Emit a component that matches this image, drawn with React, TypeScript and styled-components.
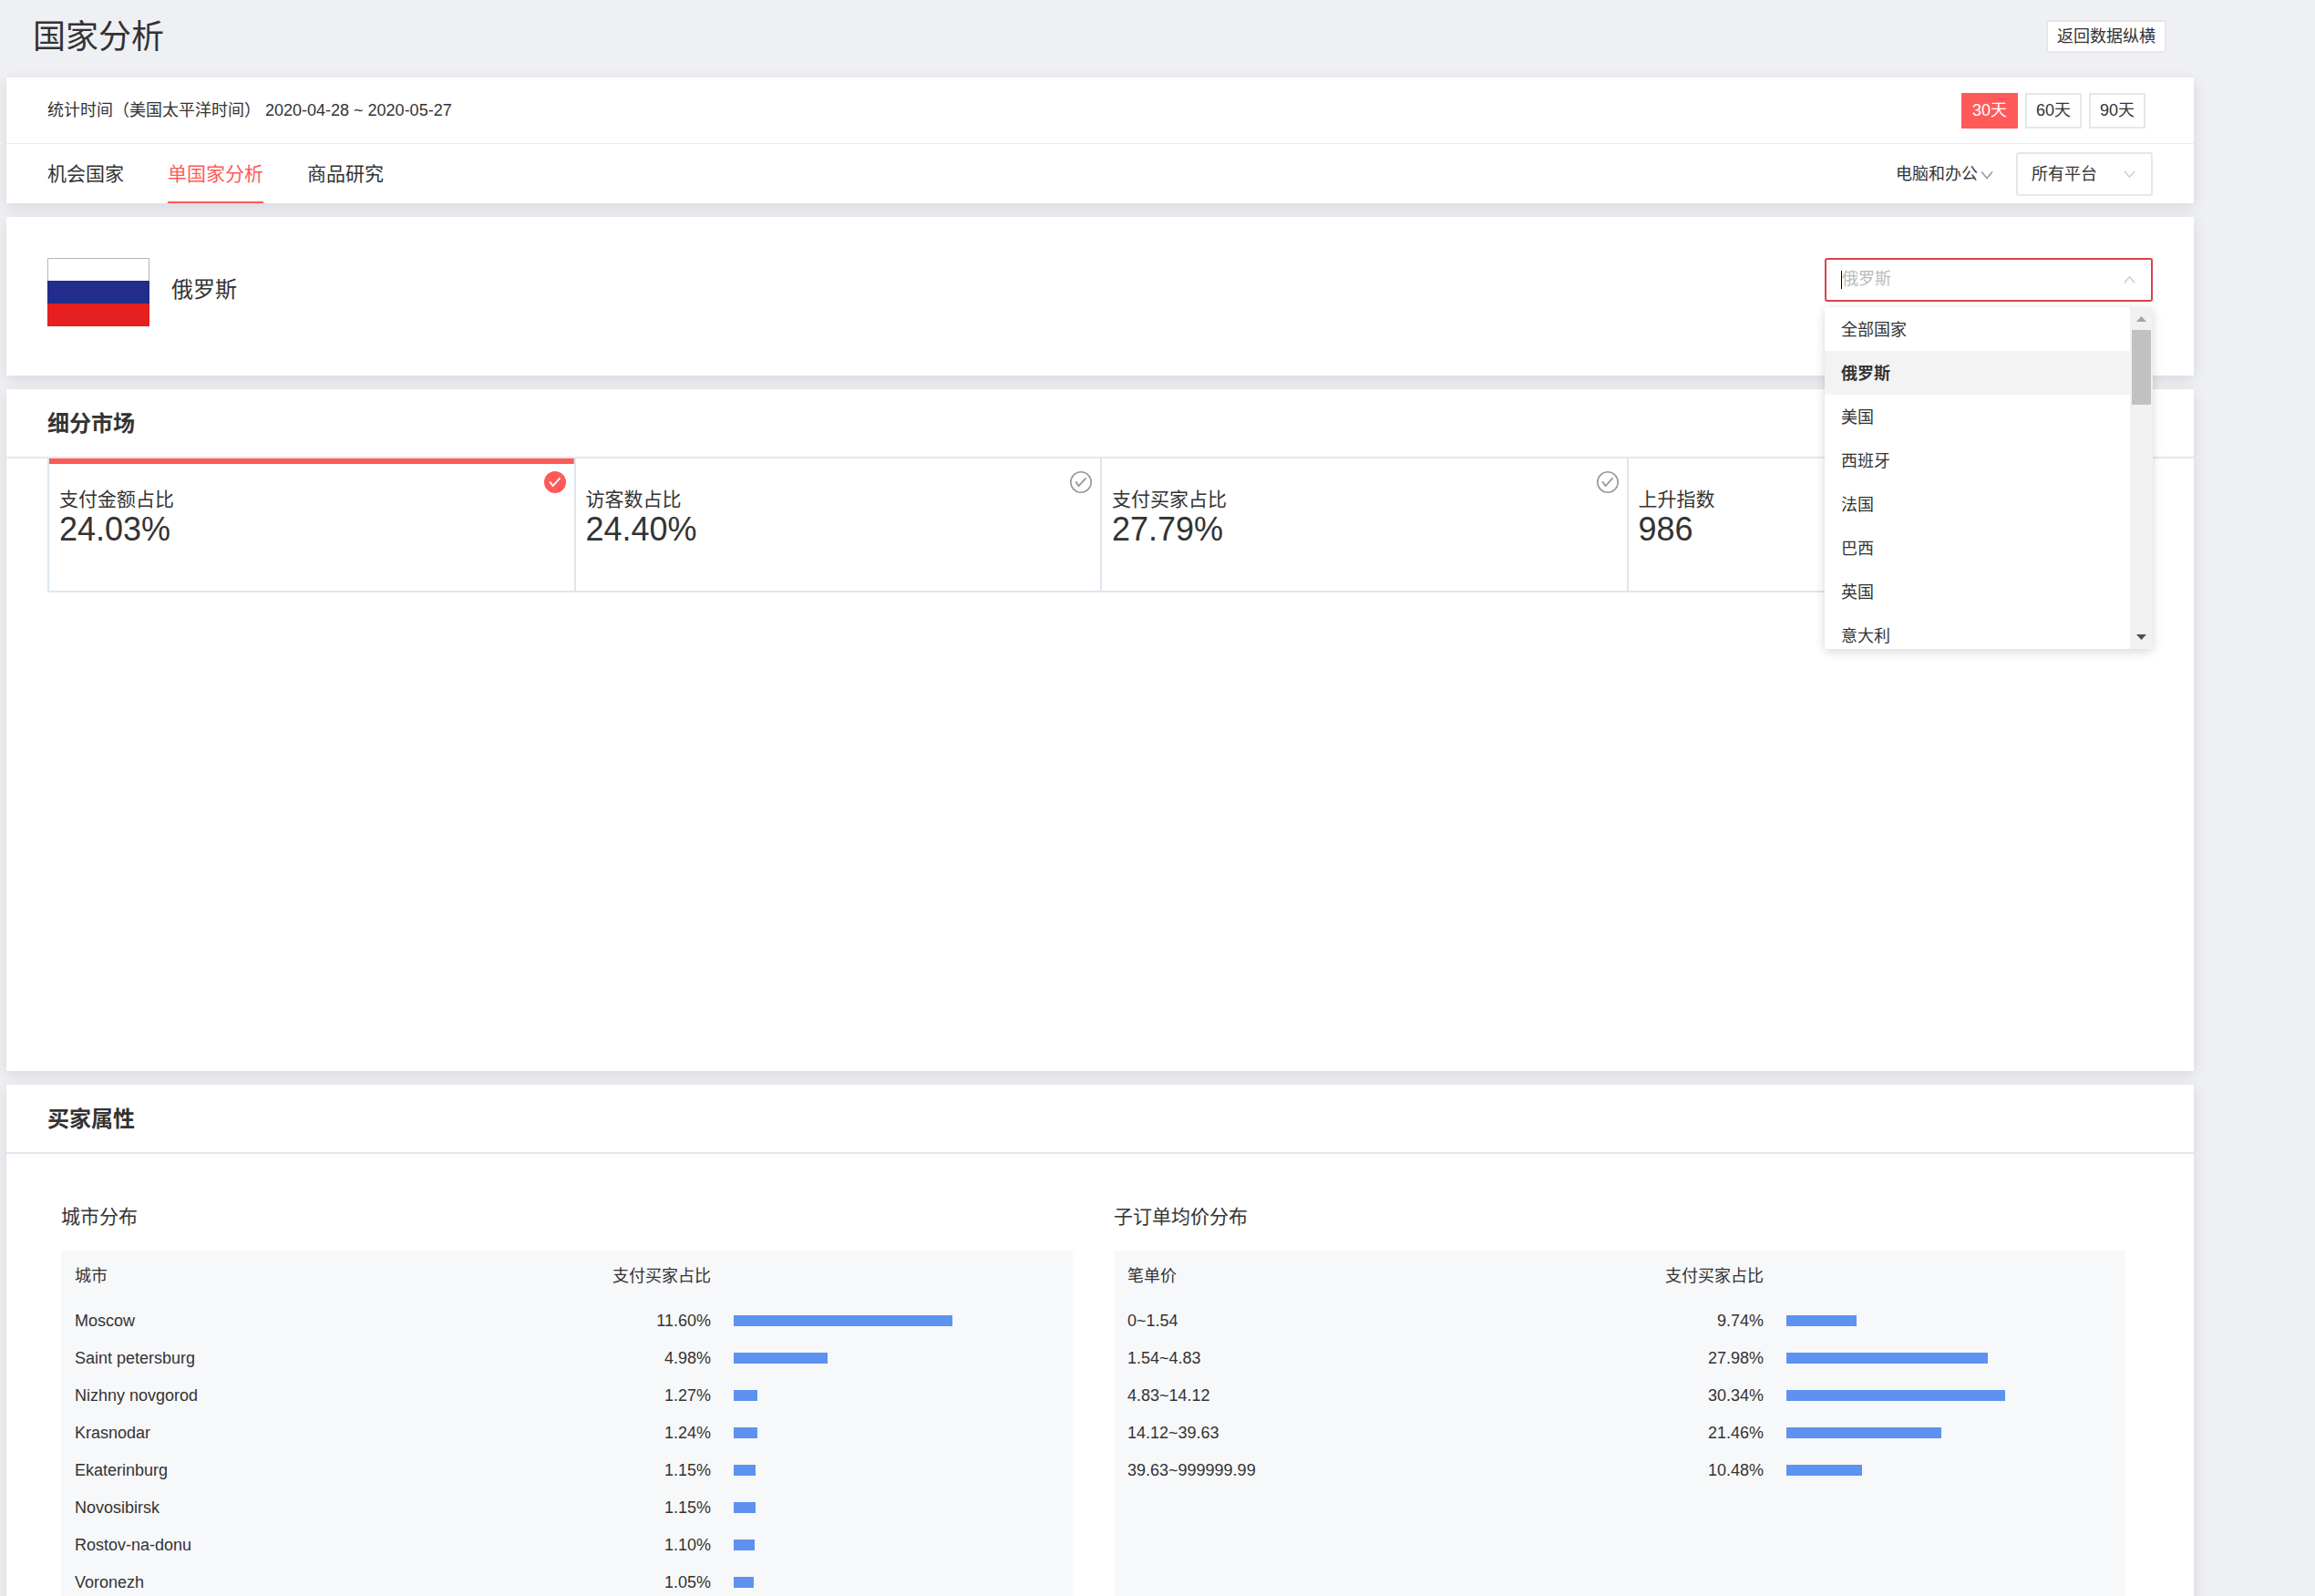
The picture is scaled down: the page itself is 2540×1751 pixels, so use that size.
import React from "react";
import styled, { createGlobalStyle } from "styled-components";

const GlobalStyle = createGlobalStyle`
  *, *::before, *::after { box-sizing: border-box; }
  html { background: #eff0f4; }
  body {
    margin: 0;
    height: 100vh;
    overflow: hidden;
    color: #333;
    font: 18px/27px "Liberation Sans", "Noto Sans CJK SC", sans-serif;
  }
  h1, h2, h3, p, ul { margin: 0; padding: 0; }
  button, input, select { font: inherit; color: inherit; }
`;

const Page = styled.div`
  display: flex;
  flex-direction: column;
  gap: 15px;
  padding: 0 133px 0 7px;
`;

const PageHeader = styled.header`
  display: flex;
  align-items: center;
  justify-content: space-between;
  height: 70px;
  padding: 10px 30px 0 29px;
`;

const PageTitle = styled.h1`
  padding-top: 2px;
  font-size: 36px;
  line-height: 54px;
  font-weight: 400;
`;

const BackButton = styled.button`
  height: 36px;
  padding: 0 10px;
  border: 2px solid #e6e7eb;
  border-radius: 3px;
  background: #fff;
  line-height: 32px;
`;

const Card = styled.section`
  background: #fff;
  box-shadow: 0 4px 15px rgba(0, 0, 0, 0.1);
`;

const FilterRow = styled.div`
  display: flex;
  align-items: center;
  justify-content: space-between;
  height: 73px;
  padding: 0 53px 0 45px;
  border-bottom: 1px solid #ebecf0;
`;

const DayGroup = styled.div`
  display: flex;
  gap: 8px;
`;

const DayButton = styled.button<{ $active?: boolean }>`
  width: 62px;
  height: 39px;
  padding: 0;
  border: 2px solid ${(p) => (p.$active ? "#ff5a5a" : "#e6e7e8")};
  background: ${(p) => (p.$active ? "#ff5a5a" : "#fff")};
  color: ${(p) => (p.$active ? "#fff" : "#333")};
`;

const TabRow = styled.div`
  display: flex;
  align-items: center;
  justify-content: space-between;
  height: 65px;
  padding: 0 45px;
`;

const Tabs = styled.nav`
  display: flex;
  gap: 48px;
  height: 100%;
`;

const Tab = styled.a<{ $active?: boolean }>`
  padding-top: 3px;
  border-bottom: 2px solid ${(p) => (p.$active ? "#ff5a5a" : "transparent")};
  color: ${(p) => (p.$active ? "#ff5a5a" : "#333")};
  font-size: 21px;
  line-height: 60px;
  text-decoration: none;
`;

const Filters = styled.div`
  display: flex;
  align-items: center;
  gap: 25px;
`;

const CategoryButton = styled.button`
  display: flex;
  align-items: center;
  gap: 3px;
  padding: 2px 0 0;
  border: 0;
  background: none;
`;

const SelectBox = styled.div`
  display: grid;
  align-items: center;
  width: 150px;
  height: 48px;

  > * { grid-area: 1 / 1; }
  > svg { justify-self: end; margin-right: 19px; pointer-events: none; }
`;

const PlatformSelect = styled.select`
  width: 100%;
  height: 100%;
  padding: 2px 15px 0;
  border: 2px solid #e6e7e8;
  border-radius: 3px;
  background: #fff;
  appearance: none;
`;

const CountryCard = styled(Card)`
  display: flex;
  align-items: flex-start;
  justify-content: space-between;
  height: 174px;
  padding: 45px;
`;

const CountryInfo = styled.div`
  display: flex;
  align-items: center;
  gap: 24px;
`;

const CountryName = styled.h2`
  padding-bottom: 6px;
  font-size: 24px;
  line-height: 36px;
  font-weight: 400;
`;

const CountryPicker = styled.div`
  position: relative;
  z-index: 1;
  width: 360px;
`;

const PickerField = styled.div`
  display: flex;
  align-items: center;
  height: 48px;
  padding: 0 17px 0 16px;
  border: 2px solid #d9444a;
  border-radius: 3px;
`;

const Caret = styled.span`
  width: 1px;
  height: 20px;
  background: #000;
`;

const PickerInput = styled.input`
  flex: 1;
  min-width: 0;
  padding: 0 0 2px;
  border: 0;
  outline: 0;
  background: none;

  &::placeholder { color: #bbb; opacity: 1; }
`;

const Dropdown = styled.div`
  position: absolute;
  top: 54px;
  left: 0;
  right: 0;
  display: flex;
  height: 375px;
  overflow: hidden;
  border-radius: 3px;
  background: #fff;
  box-shadow: 0 3px 12px rgba(0, 0, 0, 0.16);
`;

const OptionList = styled.ul`
  flex: 1;
  list-style: none;
`;

const Option = styled.li<{ $selected?: boolean }>`
  height: 48px;
  padding: 0 18px;
  background: ${(p) => (p.$selected ? "#f3f3f3" : "#fff")};
  font-weight: ${(p) => (p.$selected ? 700 : 400)};
  line-height: 50px;
`;

const ScrollTrack = styled.div`
  display: flex;
  flex-direction: column;
  align-items: center;
  width: 25px;
  background: #f1f1f1;
`;

const ScrollArrow = styled.svg`
  width: 25px;
  height: 25px;
`;

const ScrollThumb = styled.div`
  width: 21px;
  height: 82px;
  margin-bottom: auto;
  background: #c1c1c1;
`;

const SectionHeader = styled.header`
  height: 76px;
  padding: 18px 45px;
  border-bottom: 2px solid #e6e7e8;
`;

const SectionTitle = styled.h2`
  font-size: 24px;
  line-height: 40px;
  font-weight: 700;
`;

const MarketCard = styled(Card)`
  min-height: 748px;
`;

const Metrics = styled.div`
  display: grid;
  grid-template-columns: repeat(4, 1fr);
  height: 147px;
  margin: 0 45px;
  border-bottom: 2px solid #dce6ef;
`;

const Metric = styled.button<{ $active?: boolean }>`
  display: grid;
  grid-template-columns: 1fr auto;
  align-content: start;
  padding: 14px 9px 0 11px;
  border: 0 solid #dce6ef;
  border-left-width: 2px;
  background: linear-gradient(${(p) => (p.$active ? "#ff5a5a, #ff5a5a" : "#fff, #fff")}) top / 100% 6px no-repeat;
  text-align: left;

  &:last-child { border-right-width: 2px; }
`;

const MetricText = styled.span`
  display: flex;
  flex-direction: column;
  padding-top: 15px;
`;

const MetricLabel = styled.span`
  font-size: 21px;
  line-height: 31px;
`;

const MetricValue = styled.span`
  font-size: 36px;
  line-height: 36px;
`;

const Distributions = styled.div`
  display: grid;
  grid-template-columns: 1fr 1fr;
  gap: 45px;
  padding: 53px 75px 30px 60px;
`;

const Distribution = styled.section`
  display: flex;
  flex-direction: column;
  gap: 21px;
`;

const DistributionTitle = styled.h3`
  font-size: 21px;
  line-height: 32px;
  font-weight: 400;
`;

const Panel = styled.div`
  flex: 1;
  padding: 6px 0;
  background: #f7f8fa;
`;

const Table = styled.table`
  width: 100%;
  table-layout: fixed;
  border-collapse: collapse;
`;

const HeadCell = styled.th<{ $right?: boolean }>`
  height: 50px;
  padding: 0 ${(p) => (p.$right ? "25px" : "0")} 6px ${(p) => (p.$right ? "0" : "15px")};
  font-weight: 400;
  text-align: ${(p) => (p.$right ? "right" : "left")};
`;

const BarHead = styled.td`
  width: 372px;
`;

const Cell = styled.td<{ $right?: boolean }>`
  height: 41px;
  padding: 2px ${(p) => (p.$right ? "25px" : "0")} 0 ${(p) => (p.$right ? "0" : "15px")};
  text-align: ${(p) => (p.$right ? "right" : "left")};
`;

const BarCell = styled.td`
  height: 41px;
  padding: 0 132px 0 0;
`;

const Bar = styled.div`
  height: 12px;
  background: #5e92f0;
`;

function Chevron({ color, up, size = 14 }: { color: string; up?: boolean; size?: number }) {
  return (
    <svg width={size} height="10" viewBox="0 0 14 10" fill="none" stroke={color} strokeWidth="1.5" aria-hidden="true">
      <path d={up ? "M1 8.5 7 1.5 13 8.5" : "M1 1.5 7 8.5 13 1.5"} />
    </svg>
  );
}

function CheckMark({ active }: { active?: boolean }) {
  return (
    <svg width="24" height="24" viewBox="0 0 24 24" fill="none" aria-hidden="true">
      <circle
        cx="12"
        cy="12"
        r="11.2"
        fill={active ? "#ff5a5a" : "none"}
        stroke={active ? "#ff5a5a" : "#999"}
        strokeWidth="1.6"
      />
      <path d="M6.2 11.4 9.6 16 17.6 7.4" stroke={active ? "#fff" : "#999"} strokeWidth="1.8" />
    </svg>
  );
}

function RussianFlag() {
  return (
    <svg width="112" height="75" viewBox="0 0 112 75" role="img" aria-label="俄罗斯">
      <rect width="112" height="75" fill="#fff" />
      <rect y="25" width="112" height="25" fill="#232b8b" />
      <rect y="50" width="112" height="25" fill="#e62020" />
      <path d="M0.5 25V0.5H111.5V25" fill="none" stroke="#b5b5b5" />
    </svg>
  );
}

type Row = { name: string; value: number };

const cities: Row[] = [
  { name: "Moscow", value: 11.6 },
  { name: "Saint petersburg", value: 4.98 },
  { name: "Nizhny novgorod", value: 1.27 },
  { name: "Krasnodar", value: 1.24 },
  { name: "Ekaterinburg", value: 1.15 },
  { name: "Novosibirsk", value: 1.15 },
  { name: "Rostov-na-donu", value: 1.1 },
  { name: "Voronezh", value: 1.05 },
];

const prices: Row[] = [
  { name: "0~1.54", value: 9.74 },
  { name: "1.54~4.83", value: 27.98 },
  { name: "4.83~14.12", value: 30.34 },
  { name: "14.12~39.63", value: 21.46 },
  { name: "39.63~999999.99", value: 10.48 },
];

const metrics = [
  { label: "支付金额占比", value: "24.03%" },
  { label: "访客数占比", value: "24.40%" },
  { label: "支付买家占比", value: "27.79%" },
  { label: "上升指数", value: "986" },
];

const countries = ["全部国家", "俄罗斯", "美国", "西班牙", "法国", "巴西", "英国", "意大利"];

function DistributionTable({ title, nameLabel, rows }: { title: string; nameLabel: string; rows: Row[] }) {
  const max = Math.max(...rows.map((r) => r.value));
  return (
    <Distribution>
      <DistributionTitle>{title}</DistributionTitle>
      <Panel>
        <Table>
          <thead>
            <tr>
              <HeadCell scope="col">{nameLabel}</HeadCell>
              <HeadCell scope="col" $right>支付买家占比</HeadCell>
              <BarHead />
            </tr>
          </thead>
          <tbody>
            {rows.map((r) => (
              <tr key={r.name}>
                <Cell>{r.name}</Cell>
                <Cell $right>{r.value.toFixed(2)}%</Cell>
                <BarCell>
                  <Bar style={{ width: `${(r.value / max) * 100}%` }} />
                </BarCell>
              </tr>
            ))}
          </tbody>
        </Table>
      </Panel>
    </Distribution>
  );
}

export default function App() {
  return (
    <>
      <GlobalStyle />
      <Page>
        <PageHeader>
          <PageTitle>国家分析</PageTitle>
          <BackButton type="button">返回数据纵横</BackButton>
        </PageHeader>

        <Card>
          <FilterRow>
            <p>统计时间（美国太平洋时间） 2020-04-28 ~ 2020-05-27</p>
            <DayGroup>
              <DayButton type="button" $active>30天</DayButton>
              <DayButton type="button">60天</DayButton>
              <DayButton type="button">90天</DayButton>
            </DayGroup>
          </FilterRow>
          <TabRow>
            <Tabs>
              <Tab href="#opportunity">机会国家</Tab>
              <Tab href="#country" $active>单国家分析</Tab>
              <Tab href="#products">商品研究</Tab>
            </Tabs>
            <Filters>
              <CategoryButton type="button">
                电脑和办公
                <Chevron color="#999" />
              </CategoryButton>
              <SelectBox>
                <PlatformSelect aria-label="平台" defaultValue="all">
                  <option value="all">所有平台</option>
                </PlatformSelect>
                <Chevron color="#ccc" size={13} />
              </SelectBox>
            </Filters>
          </TabRow>
        </Card>

        <CountryCard>
          <CountryInfo>
            <RussianFlag />
            <CountryName>俄罗斯</CountryName>
          </CountryInfo>
          <CountryPicker>
            <PickerField>
              <Caret />
              <PickerInput aria-label="国家" placeholder="俄罗斯" />
              <Chevron color="#ccc" up size={13} />
            </PickerField>
            <Dropdown>
              <OptionList role="listbox" aria-label="国家">
                {countries.map((c) => (
                  <Option key={c} role="option" aria-selected={c === "俄罗斯"} $selected={c === "俄罗斯"}>
                    {c}
                  </Option>
                ))}
              </OptionList>
              <ScrollTrack>
                <ScrollArrow viewBox="0 0 25 25">
                  <path d="M7 16 12.5 10 18 16Z" fill="#a3a3a3" />
                </ScrollArrow>
                <ScrollThumb />
                <ScrollArrow viewBox="0 0 25 25">
                  <path d="M7 9 12.5 15 18 9Z" fill="#505050" />
                </ScrollArrow>
              </ScrollTrack>
            </Dropdown>
          </CountryPicker>
        </CountryCard>

        <MarketCard>
          <SectionHeader>
            <SectionTitle>细分市场</SectionTitle>
          </SectionHeader>
          <Metrics>
            {metrics.map((m, i) => (
              <Metric key={m.label} type="button" $active={i === 0}>
                <MetricText>
                  <MetricLabel>{m.label}</MetricLabel>
                  <MetricValue>{m.value}</MetricValue>
                </MetricText>
                <CheckMark active={i === 0} />
              </Metric>
            ))}
          </Metrics>
        </MarketCard>

        <Card>
          <SectionHeader>
            <SectionTitle>买家属性</SectionTitle>
          </SectionHeader>
          <Distributions>
            <DistributionTable title="城市分布" nameLabel="城市" rows={cities} />
            <DistributionTable title="子订单均价分布" nameLabel="笔单价" rows={prices} />
          </Distributions>
        </Card>
      </Page>
    </>
  );
}
